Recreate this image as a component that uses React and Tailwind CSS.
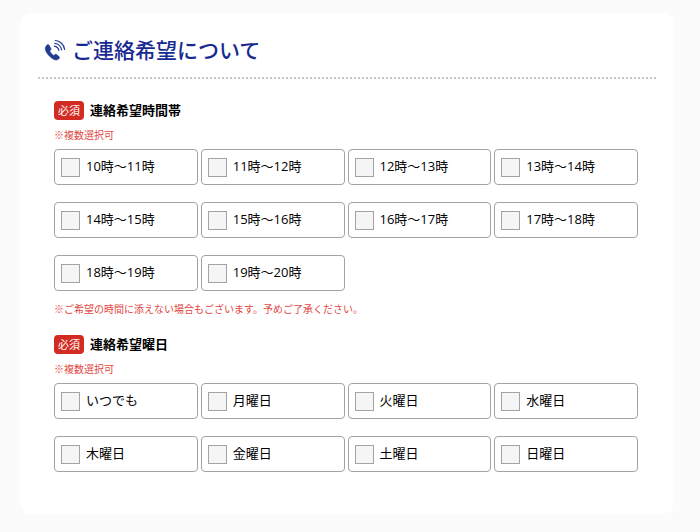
import React, { useState } from 'react';

const timeSlots = [
  '10時～11時',
  '11時～12時',
  '12時～13時',
  '13時～14時',
  '14時～15時',
  '15時～16時',
  '16時～17時',
  '17時～18時',
  '18時～19時',
  '19時～20時',
];

const weekdays = ['いつでも', '月曜日', '火曜日', '水曜日', '木曜日', '金曜日', '土曜日', '日曜日'];

const PhoneIcon = () => (
  <svg viewBox="0 0 22 22" className="h-[22px] w-[22px] shrink-0" aria-hidden="true">
    <path
      d="M2.2 6.9 C0.8 8.3 1.1 10.8 2.3 13 C4 16 6.5 18.6 9.5 20.2 C11.5 21.3 13.6 21.1 14.9 19.8 C15.8 18.9 15.7 18.2 15 17.6 L12.6 15.6 C11.9 15.1 11.2 15.2 10.7 15.7 L9.8 16.6 C8.3 15.6 6.5 13.6 5.7 12 L6.6 11.1 C7.1 10.6 7.2 10 6.8 9.3 L5.1 6.3 C4.6 5.5 3.9 5.3 3.2 5.9 Z"
      fill="#213b8f"
      stroke="#213b8f"
      strokeWidth="0.6"
      strokeLinejoin="round"
    />
    <g fill="none" stroke="#213b8f" strokeWidth="1.2" strokeLinecap="round">
      <path d="M11.3 1.5 C16 1.7 20 5.6 20.6 10.3" />
      <path d="M10.8 4.3 C14.3 4.6 17.1 7.4 17.6 10.8" />
      <path d="M10.3 7.1 C12.6 7.4 14.4 9.1 14.8 11.3" />
    </g>
  </svg>
);

const CheckGroup = ({ name, title, options }) => {
  const [selected, setSelected] = useState([]);

  const toggle = (value) => {
    setSelected((prev) =>
      prev.includes(value) ? prev.filter((v) => v !== value) : [...prev, value]
    );
  };

  return (
    <fieldset>
      <legend className="flex items-center gap-1.5">
        <span className="rounded bg-[#d22b22] px-1 text-[11px] leading-[19px] text-white">
          必須
        </span>
        <span className="text-[13px] leading-[19px] font-bold text-black">{title}</span>
      </legend>
      <p className="mt-2 mb-1.5 text-[10px] leading-[15px] text-[#e2463f]">※複数選択可</p>
      <div className="grid grid-cols-4 gap-x-[3px] gap-y-[17px]">
        {options.map((option) => (
          <label
            key={option}
            className="flex h-9 items-center gap-1.5 rounded border border-[#a3a3a3] px-1.5 text-[13px] text-black"
          >
            <input
              type="checkbox"
              name={name}
              value={option}
              checked={selected.includes(option)}
              onChange={() => toggle(option)}
              className="h-[19px] w-[19px] shrink-0 appearance-none border border-[#a3a3a3] bg-[#f5f5f5] checked:bg-[#213b8f]"
            />
            {option}
          </label>
        ))}
      </div>
    </fieldset>
  );
};

const App = () => {
  return (
    <div className="min-h-screen bg-[#fbfbfb] pt-[13px] pr-[26px] pb-[18px] pl-5 font-['Open_Sans','Noto_Sans_CJK_JP',sans-serif]">
      <main className="rounded-xl bg-white px-[18px] pt-[22px] pb-[42px]">
        <h1 className="flex items-center gap-1.5 border-b-2 border-dotted border-[#c8c8c8] px-1.5 pb-3 text-[21px] leading-[30px] font-medium text-[#182a92]">
          <PhoneIcon />
          ご連絡希望について
        </h1>
        <form className="pt-[22px] pr-[18px] pl-4">
          <CheckGroup name="time" title="連絡希望時間帯" options={timeSlots} />
          <p className="mt-[11px] mb-[18px] text-[10px] leading-[15px] text-[#e2463f]">
            ※ご希望の時間に添えない場合もございます。予めご了承ください。
          </p>
          <CheckGroup name="weekday" title="連絡希望曜日" options={weekdays} />
        </form>
      </main>
    </div>
  );
};

export default App;
